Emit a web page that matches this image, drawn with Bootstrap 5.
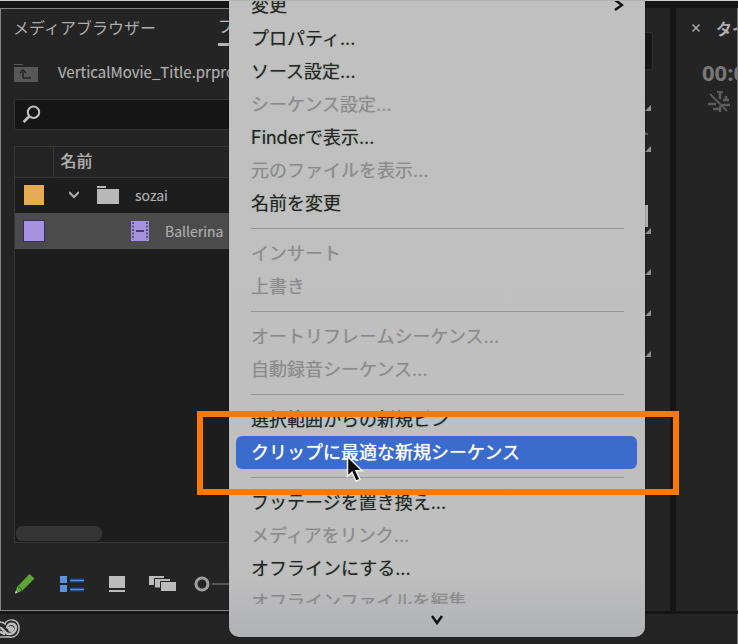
<!DOCTYPE html>
<html lang="ja">
<head>
<meta charset="utf-8">
<meta name="viewport" content="width=device-width, initial-scale=1">
<title>VerticalMovie_Title.prproj</title>
<link href="https://cdn.jsdelivr.net/npm/bootstrap@5.3.0/dist/css/bootstrap.min.css" rel="stylesheet">
<style>
  body { background: #161616; color: #adadad; font: 16px/24px "Noto Sans CJK JP", sans-serif; }
  button { background: none; border: 0; padding: 0; color: inherit; }
  svg { display: block; flex: none; }
  .top-edge { height: 8px; border-top: 1px solid #ccd1cf; }
  .pane { background: #242424; }
  .project-pane { border: 1px solid #858585; border-right: 0; padding-left: 13px; min-width: 0; text-shadow: 0 0 1px #8888; }
  .tabs { padding-top: 4px; white-space: nowrap; }
  .tab-current { border-bottom: 3px solid #b5b5b5; color: #c4c4c4; }
  .tab-btn { height: 33px; padding-bottom: 6px; margin-left: -1px; }
  .tab-gap { margin-left: 62px; }
  .path-row { height: 53px; }
  .path-name { font-size: 15px; padding-bottom: 2px; }
  .item-name { font-size: 14px; }
  .search { background: #161616; border: 1px solid #343434; border-radius: 3px; height: 31px; padding-left: 7px; }
  .search input { background: none; border: 0; outline: 0; color: #ccc; min-width: 0; }
  .bin { background: #1d1d1d; border: 1px solid #363636; margin-top: 16px; padding-bottom: 1px; }
  .bin table { table-layout: fixed; white-space: nowrap; }
  .bin th { background: #242424; height: 30px; padding: 0 7px 4px; font-weight: 500; border-bottom: 1px solid #363636; }
  .bin th + th { border-left: 1px solid #363636; }
  .bin td { height: 36px; padding: 0; }
  .bin .chosen td { background: #4b4b4b; }
  .label-col { width: 38px; }
  .swatch { width: 20px; height: 20px; margin-left: 9px; }
  .swatch-orange { background: #e5ab55; }
  .swatch-violet { background: #a692df; box-shadow: 0 0 0 1px #392e62; }
  .scroll-thumb { width: 86px; height: 15px; border-radius: 6px; background: #343434; margin-left: 1px; }
  .view-bar { height: 67px; padding-top: 14px; }
  .tools-pane { width: 180px; padding: 24px 17px 0 0; margin-right: 6px; }
  .tools-field { height: 38px; background: #171719; border: 1px solid #303030; border-radius: 3px; }
  .tool { height: 41px; padding-right: 2px; }
  .timeline-pane { width: 62px; border-right: 1px solid #777; padding-top: 8px; white-space: nowrap; }
  .timecode { font: 700 22px/24px "Open Sans", sans-serif; color: #777; margin: 20px 0 7px 26px; }
  .status { height: 30px; background: #242424; margin-top: 3px; border-right: 1px solid #777; }
  .context-menu { position: absolute; left: 229px; top: 1px; bottom: 7px; width: 416px; z-index: 2;
    background: linear-gradient(#c0c0c0 0%, #bfbfc0 90%, #b1b2b4 100%); border-radius: 0 0 10px 10px;
    box-shadow: 0 0 2px #0008; font-family: Inter, "Noto Sans CJK JP", sans-serif; font-size: 18px; font-weight: 500; color: #252525; }
  .menu-list { min-height: 0; padding: 0 8px 0 7px; }
  .menu-list > :first-child { margin-top: -12px; }
  .entry { height: 33px; padding: 1px 13px 0 15px; border-radius: 6px; flex: none; text-align: left; white-space: nowrap; text-shadow: 0 0 1px #2528; }
  .entry:disabled { color: #8b8b8b; font-weight: 400; text-shadow: 0 0 1px #8888; }
  .entry.active { background: #3a6bcd; color: #fff; text-shadow: 0 0 1px #fff; }
  .rule { height: 17px; flex: none; padding: 8px 13px 8px 15px; }
  .rule hr { margin: 0; border: 0; border-top: 1px solid #979797; opacity: 1; }
  .menu-more { height: 34px; }
  .callout { position: absolute; left: 197px; top: 411px; width: 482px; height: 84px; border: 6px solid #ff7900; z-index: 3; pointer-events: none; }
  .pointer { position: absolute; left: 346px; top: 455px; z-index: 4; }
</style>
<script src="https://cdn.jsdelivr.net/npm/bootstrap@5.3.0/dist/js/bootstrap.bundle.min.js"></script>
</head>
<body class="vh-100 overflow-hidden position-relative d-flex flex-column">
<div class="top-edge"></div>
<main class="d-flex flex-fill">
  <section class="pane project-pane flex-fill d-flex flex-column">
    <div class="tabs d-flex">
      <button class="tab-btn">メディアブラウザー</button>
      <button class="tab-btn tab-gap tab-current">プロジェクト</button>
    </div>
    <div class="path-row d-flex align-items-center overflow-hidden">
      <button aria-label="上の階層へ" class="me-3"><svg width="24" height="18" viewBox="0 0 24 18"><path d="M0 0h9v1H0zM0 3h24v15H0z" fill="#575757"/><path d="M9 14V8M6 9l3-3 3 3M9 14h8" fill="none" stroke="#252525" stroke-width="1.5"/></svg></button>
      <span class="path-name ms-1">VerticalMovie_Title.prproj</span>
    </div>
    <div class="search d-flex align-items-center">
      <svg width="19" height="19" viewBox="0 0 19 19" fill="none" stroke="#c1c1c1"><circle cx="11.5" cy="7.2" r="5.7" stroke-width="2"/><path d="M7.5 11.2 1.5 17" stroke-width="2.6"/></svg>
      <input class="flex-fill" type="text" aria-label="検索">
    </div>
    <div class="bin flex-fill d-flex flex-column">
      <table class="w-100">
        <colgroup><col class="label-col"><col></colgroup>
        <thead><tr><th aria-label="ラベル"></th><th>名前</th></tr></thead>
        <tbody>
          <tr><td><div class="swatch swatch-orange"></div></td>
            <td><div class="d-flex align-items-center">
              <button class="ms-3" aria-label="閉じる"><svg width="10" height="8" viewBox="0 0 10 8"><path d="m0 1 5 5 5-5" fill="none" stroke="#adadad" stroke-width="2"/></svg></button>
              <svg class="ms-3 me-3" width="24" height="18" viewBox="-2 0 24 18"><path d="M0 0h9v2H0zM0 3h22v15H0z" fill="#b8b8b8"/></svg>
              <span class="item-name">sozai</span></div></td></tr>
          <tr class="chosen"><td><div class="swatch swatch-violet"></div></td>
            <td><div class="d-flex align-items-center">
              <svg class="ms-5 me-3" width="48" height="20" viewBox="-30 0 48 20"><path d="M0 0h18v20H0z" fill="#a692df"/><path d="M2 1v18M16 1v18" stroke="#4b4267" stroke-width="1.6" stroke-dasharray="2 1.5"/><path d="M5 10h8" stroke="#483d70" stroke-width="2"/></svg>
              <span class="item-name">Ballerina</span></div></td></tr>
        </tbody>
      </table>
      <div class="scroll-thumb mt-auto"></div>
    </div>
    <div class="view-bar d-flex align-items-center">
      <button aria-label="編集可能"><svg width="22" height="22" viewBox="0 0 22 22"><path d="M1 20.500 3 14 15.500 1 20.500 5.500 8 18z" fill="#5ca536"/><path d="M4 14c2 0 4 2 3.500 4" fill="none" stroke="#275b18"/><path d="m1 20.500.9-2.700 1.800 1.800z" fill="#c9dcc4"/></svg></button>
      <button aria-label="リスト表示" class="ms-4"><svg width="25" height="16" viewBox="3 0 25 16"><path d="M2 0h8v7H2zM2 9h8v7H2z" fill="#5a90de"/><path d="M13 4.500h14M13 13.500h14" stroke="#123c86" stroke-width="4"/><path d="M13 4.500h14M13 13.500h14" stroke="#5a90de" stroke-width="1.500"/></svg></button>
      <button aria-label="アイコン表示" class="ms-4"><svg width="16" height="16" viewBox="0 0 16 16"><path d="M0 0h16v12H0zM0 14h16v2H0z" fill="#bcbcbc"/></svg></button>
      <button aria-label="フリーフォーム表示" class="ms-4"><svg width="28" height="16" viewBox="0 0 28 16" fill="#bcbcbc" stroke="#242424"><path d="M-.5-.5h16v10h-16z"/><path d="M5.500 2.500h16v9.500h-16z"/><path d="M11.500 5.500h16v10h-16z"/></svg></button>
      <svg class="ms-3" width="80" height="16" viewBox="0 0 80 16"><circle cx="9" cy="8" r="6" fill="none" stroke="#a0a0a0" stroke-width="3"/><path d="M19 8h61" stroke="#555" stroke-width="2"/></svg>
    </div>
  </section>
  <section class="pane tools-pane flex-shrink-0">
    <div class="tools-field"></div>
    <div class="tool d-flex align-items-end justify-content-end"><svg width="6" height="6"><path d="M6 0v6H0z" fill="#909090"/></svg></div>
    <div class="tool d-flex align-items-end justify-content-end"><svg width="8" height="21"><path d="M8 15v6H2z" fill="#909090"/><path d="M0 3h5M2 1v3" stroke="#909090"/></svg></div>
    <div class="tool"></div>
    <div class="tool d-flex align-items-end justify-content-end"><svg width="12" height="29"><path d="M0 0h9v22H0z" fill="#b4b4b4"/><path d="M12 23v6H6z" fill="#909090"/></svg></div>
    <div class="tool d-flex align-items-end justify-content-end"><svg width="6" height="6"><path d="M6 0v6H0z" fill="#909090"/></svg></div>
    <div class="tool d-flex align-items-end justify-content-end"><svg width="6" height="6"><path d="M6 0v6H0z" fill="#909090"/></svg></div>
    <div class="tool d-flex align-items-end justify-content-end"><svg width="6" height="6"><path d="M6 0v6H0z" fill="#909090"/></svg></div>
  </section>
  <section class="pane timeline-pane overflow-hidden flex-shrink-0">
    <div class="d-flex align-items-center ps-3"><button aria-label="タブを閉じる"><svg width="8" height="8" viewBox="0 0 8 8"><path d="m.5.500 7 7m0-7-7 7" stroke="#aaa" stroke-width="1.500"/></svg></button><b class="ms-3">タイムライン</b></div>
    <div class="timecode">00:00</div>
    <svg class="ms-4" width="30" height="22" viewBox="-8 0 30 22" fill="none" stroke="#5c5c5c"><path d="m2 3 17 17" stroke-width="2"/><path d="M9 1h6M12 1v7" stroke-width="2.500"/><path d="M0 13h8M15 9h6M5 18h6M13 14h9M12 15v6M18 5v3" stroke-width="2.500"/></svg>
  </section>
</main>
<footer class="status d-flex align-items-center flex-shrink-0">
  <svg width="20" height="20" viewBox="0 0 20 20" fill="none"><path d="M0 3C3 3 4 4 5 5c2-6 14-6 14 4 0 7-5 10-10 9H0" fill="#292929" stroke="#bcbcbc" stroke-width="1.500"/><path d="M0 9c3-1 4 6 9 6 7 0 9-8 4-10-3-1-6 1-6 4M0 13c2 0 3 2 5 2M7 8l5 4" stroke="#bcbcbc" stroke-width="2.500"/><circle cx="11" cy="10" r="3" fill="#bcbcbc"/></svg>
</footer>

<div class="context-menu d-flex flex-column" role="menu">
  <div class="menu-list flex-fill overflow-hidden d-flex flex-column">
    <button class="entry d-flex align-items-center justify-content-between">変更<svg width="12" height="14" viewBox="0 0 12 14"><path d="m3 1 7 5-7 5" fill="none" stroke="#111" stroke-width="2.500"/></svg></button>
    <button class="entry">プロパティ...</button>
    <button class="entry">ソース設定...</button>
    <button class="entry" disabled>シーケンス設定...</button>
    <button class="entry">Finderで表示...</button>
    <button class="entry" disabled>元のファイルを表示...</button>
    <button class="entry">名前を変更</button>
    <div class="rule"><hr></div>
    <button class="entry" disabled>インサート</button>
    <button class="entry" disabled>上書き</button>
    <div class="rule"><hr></div>
    <button class="entry" disabled>オートリフレームシーケンス...</button>
    <button class="entry" disabled>自動録音シーケンス...</button>
    <div class="rule"><hr></div>
    <button class="entry">選択範囲からの新規ビン</button>
    <button class="entry active">クリップに最適な新規シーケンス</button>
    <div class="rule"><hr></div>
    <button class="entry">フッテージを置き換え...</button>
    <button class="entry" disabled>メディアをリンク...</button>
    <button class="entry">オフラインにする...</button>
    <button class="entry" disabled>オフラインファイルを編集</button>
  </div>
  <button class="menu-more d-flex align-items-center justify-content-center" aria-label="下へスクロール"><svg width="12" height="10" viewBox="0 0 12 10"><path d="m1 1 5 7 5-7" fill="none" stroke="#111" stroke-width="2.500"/></svg></button>
</div>
<div class="callout"></div>
<svg class="pointer" width="18" height="28" viewBox="0 0 18 28"><path d="M1.500 1.500v20l4.500-4.300 4 9 4-1.800-4-8.700h6z" fill="#0a0a0a" stroke="#f2f2f2" stroke-width="1.500"/></svg>
</body>
</html>
